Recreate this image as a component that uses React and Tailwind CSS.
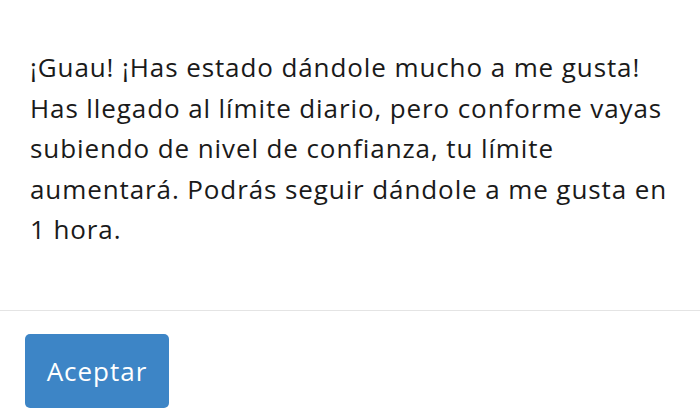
export default function App() {
  return (
    <div className="w-[700px] h-[416px] bg-white overflow-hidden" style={{ fontFamily: '"Open Sans", "Noto Sans", sans-serif' }}>
      <div className="pt-[47px] pl-[30px] pr-[10px] h-[310px]">
        <p className="text-[26px] leading-[40.5px] tracking-[0.9px] text-[#1a1a1a] whitespace-nowrap">
          ¡Guau! ¡Has estado dándole mucho a me gusta!<br />
          Has llegado al límite diario, pero conforme vayas<br />
          subiendo de nivel de confianza, tu límite<br />
          aumentará. Podrás seguir dándole a me gusta en<br />
          1 hora.
        </p>
      </div>
      <div className="border-t border-[#e4e4e4] pt-[23px] pl-[25px]">
        <button className="w-[144px] h-[74px] rounded-[5px] bg-[#3d85c6] text-white text-[26px] tracking-[1px]">
          Aceptar
        </button>
      </div>
    </div>
  )
}
